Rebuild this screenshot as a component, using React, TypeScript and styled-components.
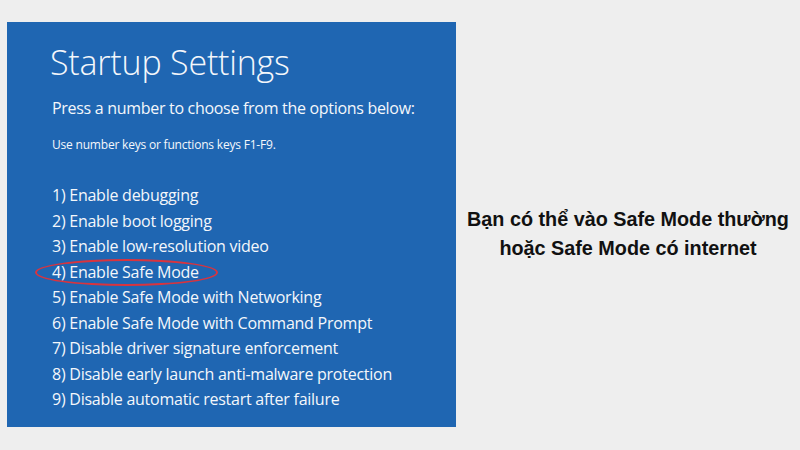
import styled, { createGlobalStyle } from 'styled-components'

const Global = createGlobalStyle`
  html, body {
    margin: 0;
    padding: 0;
    background: #eeeeee;
  }
`

const Page = styled.div`
  width: 800px;
  height: 450px;
  display: flex;
  align-items: flex-start;
  background: #eeeeee;
`

const Panel = styled.div`
  margin-top: 22px;
  margin-left: 7px;
  width: 449px;
  height: 405px;
  box-sizing: border-box;
  padding: 17px 0 0 43px;
  background: #1f66b2;
  color: #f4f7fb;
  font-family: "Open Sans", "Noto Sans", sans-serif;
`

const Title = styled.h1`
  margin: 0;
  font-size: 34px;
  font-weight: 300;
  line-height: 46px;
  letter-spacing: -0.2px;
`

const Lead = styled.p`
  margin: 12px 0 0 2px;
  font-size: 16px;
  line-height: 22px;
  letter-spacing: -0.3px;
`

const Hint = styled.p`
  margin: 18px 0 0 2px;
  font-size: 12px;
  line-height: 16px;
  letter-spacing: -0.2px;
`

const Options = styled.ol`
  list-style: none;
  margin: 30px 0 0 2px;
  padding: 0;
`

const Option = styled.li`
  position: relative;
  font-size: 16px;
  line-height: 25.5px;
  letter-spacing: -0.25px;
`

const Circle = styled.span`
  position: absolute;
  left: -17px;
  top: -1px;
  width: 179px;
  height: 23px;
  border: 2px solid #d9343e;
  border-radius: 50%;
  pointer-events: none;
`

const Side = styled.div`
  flex: 1;
  height: 100%;
  display: flex;
  align-items: center;
  justify-content: center;
  padding-top: 18px;
  box-sizing: border-box;
`

const Caption = styled.p`
  margin: 0;
  text-align: center;
  font-family: "Liberation Sans", Arial, sans-serif;
  font-weight: 700;
  font-size: 19.8px;
  line-height: 29.5px;
  color: #111111;
`

const options = [
  '1) Enable debugging',
  '2) Enable boot logging',
  '3) Enable low-resolution video',
  '4) Enable Safe Mode',
  '5) Enable Safe Mode with Networking',
  '6) Enable Safe Mode with Command Prompt',
  '7) Disable driver signature enforcement',
  '8) Disable early launch anti-malware protection',
  '9) Disable automatic restart after failure',
]

export default function App() {
  return (
    <>
      <Global />
      <Page>
        <Panel>
          <Title>Startup Settings</Title>
          <Lead>Press a number to choose from the options below:</Lead>
          <Hint>Use number keys or functions keys F1-F9.</Hint>
          <Options>
            {options.map((text, i) => (
              <Option key={text}>
                {text}
                {i === 3 && <Circle />}
              </Option>
            ))}
          </Options>
        </Panel>
        <Side>
          <Caption>
            Bạn có thể vào Safe Mode thường
            <br />
            hoặc Safe Mode có internet
          </Caption>
        </Side>
      </Page>
    </>
  )
}
